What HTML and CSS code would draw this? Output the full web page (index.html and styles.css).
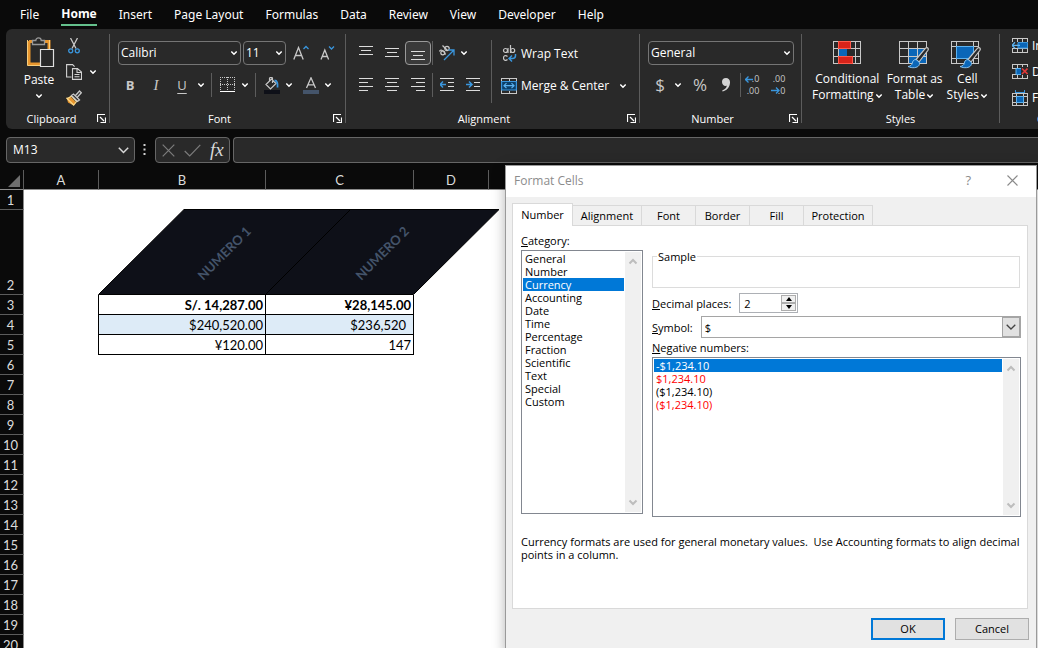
FILE: index.html
```html
<!DOCTYPE html>
<html lang="en">
<head>
<meta charset="utf-8">
<title>Format Cells</title>
<link rel="stylesheet" href="styles.css">
</head>
<body>
<svg class="defs" aria-hidden="true">
  <symbol id="chev" viewBox="0 0 8 6"><path d="M1.300 1.500 4 4.200 6.700 1.500" fill="none" stroke="currentColor" stroke-width="1.500"/></symbol>
  <symbol id="launch" viewBox="0 0 9 9"><path d="M.5 8V.5H8M3 3l4 4M8.500 3.500v5H3.500" fill="none" stroke="currentColor" stroke-width="1.2"/></symbol>
  <symbol id="scroll" viewBox="0 0 10 7"><path d="M1.500 5.500 5 2l3.500 3.500" fill="none" stroke="currentColor" stroke-width="2"/></symbol>
  <symbol id="brush" viewBox="0 0 24 22"><path d="M22.500 .8c-1-.7-2 .3-3 1.500L11 12.500l3 2.500L22.800 3.500c.7-1 .6-2-.3-2.700z" fill="#292929" stroke="#c8c8c8" stroke-width="1.200"/><path d="M11 12.500c-3 .2-3.300 2-3.800 4-.4 1.500-1.500 2.500-4.200 3 4 2 9.500 1.500 11-1.200.7-1.300.6-2.300 0-3.300z" fill="#0a66b8" stroke="#8cc4ee" stroke-width="1"/></symbol>
</svg>

<nav class="tabs">
  <button>File</button><button class="active">Home</button><button>Insert</button><button>Page Layout</button><button>Formulas</button><button>Data</button><button>Review</button><button>View</button><button>Developer</button><button>Help</button>
</nav>

<div class="ribbon">
  <section class="group clipboard">
    <div class="body">
      <button class="paste">
        <svg width="30" height="32" viewBox="0 0 30 32"><path d="M3 4.500h20V13M14 27H3V4" fill="none" stroke="#e8962e" stroke-width="3"/><path d="M1.500 3v25.500H14M23.500 3v10" fill="none" stroke="#f8ce7c"/><path d="M6.500 7.500v-4h3.300a2.700 2.700 0 0 1 5.400 0h3.300v4z" fill="#292929" stroke="#989898" stroke-width="1.300"/><path d="M14.500 12.500h13v17h-13z" fill="#292929" stroke="#e0e0e0" stroke-width="1.200"/></svg>
        <span>Paste</span>
        <svg class="chev"><use href="#chev"/></svg>
      </button>
      <div class="clip-side">
        <button aria-label="Cut"><svg width="16" height="16" viewBox="0 0 16 16"><path d="M4.500 0 10 10.500M11.500 0 6 10.500" stroke="#c8c8c8" stroke-width="1.300"/><circle cx="4.700" cy="12.800" r="2" fill="none" stroke="#3a96dd" stroke-width="1.300"/><circle cx="11.300" cy="12.800" r="2" fill="none" stroke="#3a96dd" stroke-width="1.300"/></svg></button>
        <button aria-label="Copy"><svg width="16" height="16" viewBox="0 0 16 16"><path d="M5.500 13H.6V.6h6l2 2M6.500 4.600h5l4 3.500v7.300h-9zM11 4.800v3.700h4M8.500 10.500h5M8.500 12.800h5" fill="none" stroke="#d2d2d2" stroke-width="1.100"/></svg><svg class="chev"><use href="#chev"/></svg></button>
        <button aria-label="Format Painter"><svg width="16" height="16" viewBox="0 0 16 16"><path d="M.8 8.300 5 7l5 5.500-2.500 3L2 12.500z" fill="#e8962e"/><path d="M1 8.300c2 0 3-.8 4.500-2.300l5 5.500L7.700 15z" fill="none" stroke="#f8d88c" stroke-width="1.200"/><path d="M5.500 5.500 7.500 4l6 6-2 1.500zM9.500 5.500l4-4.500 1.800 1.800-4 4.500" fill="#292929" stroke="#c8c8c8" stroke-width="1.300"/></svg></button>
      </div>
    </div>
    <footer><span>Clipboard</span><button aria-label="Clipboard settings"><svg class="launch"><use href="#launch"/></svg></button></footer>
  </section>

  <section class="group font">
    <div class="body rows">
      <div class="row pick">
        <label class="drop family"><select aria-label="Font family"><option>Calibri</option></select><svg class="chev"><use href="#chev"/></svg></label>
        <label class="drop size"><select aria-label="Font size"><option>11</option></select><svg class="chev"><use href="#chev"/></svg></label>
        <button class="tool" aria-label="Increase font size"><svg width="16" height="16" viewBox="0 0 16 16"><path d="M.8 14.500 5.500 2.500l4.700 12M2.500 10.500h6" fill="none" stroke="#c8c8c8" stroke-width="1.300"/><path d="M10.500 4 13 1.500 15.500 4" fill="none" stroke="#3a96dd" stroke-width="1.300"/></svg></button>
        <button class="tool" aria-label="Decrease font size"><svg width="16" height="16" viewBox="0 0 16 16"><path d="M2 14.500 5.800 5l3.800 9.500M3.300 11.500h5" fill="none" stroke="#c8c8c8" stroke-width="1.300"/><path d="M10 1.500 12.500 4 15 1.500" fill="none" stroke="#3a96dd" stroke-width="1.300"/></svg></button>
      </div>
      <div class="row">
        <button class="tool bold">B</button><button class="tool italic">I</button><button class="tool under">U</button><button class="more" aria-label="Underline styles"><svg class="chev"><use href="#chev"/></svg></button>
        <i class="sep"></i>
        <button class="tool slim" aria-label="Borders"><svg width="16" height="16" viewBox="0 0 16 16" shape-rendering="crispEdges"><path d="M0 .5h16M0 7.500h16M.5 0v15M7.500 0v15M14.500 0v15" stroke="#c8c8c8" stroke-dasharray="1 1"/><path d="M0 14.500h15" stroke="#fff"/></svg></button><button class="more" aria-label="Border styles"><svg class="chev"><use href="#chev"/></svg></button>
        <i class="sep"></i>
        <button class="tool slim" aria-label="Fill color"><svg width="16" height="17" viewBox="0 0 16 17"><path d="M2 7.500 7.500 2l4.500 4.500-5.500 5.500zM5.500 4V1.500c0-1.500 3-1.500 3 0V6" fill="none" stroke="#c8c8c8" stroke-width="1.200"/><path d="M10.500 3.500c2.500 0 3.500 2.500 3 7" fill="none" stroke="#3a96dd" stroke-width="1.800"/><path d="M0 13h16v4H0z" fill="#0e1018"/></svg></button><button class="more" aria-label="Fill colors"><svg class="chev"><use href="#chev"/></svg></button>
        <button class="tool slim ink" aria-label="Font color"><svg width="16" height="17" viewBox="0 0 16 17"><path d="M3.500 11 8 .8l4.500 10.200M5 7.800h6" fill="none" stroke="#c8c8c8" stroke-width="1.300"/><path d="M0 13h16v4H0z" fill="#44546a"/></svg></button><button class="more" aria-label="Font colors"><svg class="chev"><use href="#chev"/></svg></button>
      </div>
    </div>
    <footer><span>Font</span><button aria-label="Font settings"><svg class="launch"><use href="#launch"/></svg></button></footer>
  </section>

  <section class="group align">
    <div class="body">
      <div class="rows">
        <div class="row">
          <button class="tool" aria-label="Top align"><svg class="lines" viewBox="0 0 14 16"><path d="M0 1.500h14M2 5.500h10M0 9.500h14"/></svg></button>
          <button class="tool" aria-label="Middle align"><svg class="lines" viewBox="0 0 14 16"><path d="M0 3.500h14M2 7.500h10M0 11.500h14"/></svg></button>
          <button class="tool on" aria-label="Bottom align"><svg class="lines" viewBox="0 0 14 16"><path d="M0 6.500h14M2 10.500h10M0 14.500h14"/></svg></button>
          <i class="sep tight"></i>
          <button class="tool" aria-label="Orientation"><svg width="18" height="18" viewBox="0 0 18 18"><g fill="none" stroke="#c8c8c8" stroke-width="1.200"><circle cx="4.800" cy="8.800" r="2"/><path d="M1.500 7.500c1-2.500 3-2 6.200 3"/><circle cx="9" cy="4.500" r="2.200"/><path d="m4.500 1.500 5 5"/></g><path d="M6 16 15.500 6.500M10.500 6h5.500v5.500" fill="none" stroke="#3a96dd" stroke-width="1.300"/></svg></button><button class="more" aria-label="Orientation options"><svg class="chev"><use href="#chev"/></svg></button>
        </div>
        <div class="row">
          <button class="tool" aria-label="Align left"><svg class="lines" viewBox="0 0 14 16"><path d="M0 1.500h14M0 5.500h9M0 9.500h14M0 13.500h9"/></svg></button>
          <button class="tool" aria-label="Center"><svg class="lines" viewBox="0 0 14 16"><path d="M0 1.500h14M2 5.500h10M0 9.500h14M2 13.500h10"/></svg></button>
          <button class="tool" aria-label="Align right"><svg class="lines" viewBox="0 0 14 16"><path d="M0 1.500h14M5 5.500h9M0 9.500h14M5 13.500h9"/></svg></button>
          <i class="sep tight"></i>
          <button class="tool" aria-label="Decrease indent"><svg class="lines" viewBox="0 0 14 16"><path d="M0 1.500h14M8 5.500h6M8 9.500h6M0 13.500h14"/><path class="blue" d="M0 7.500h6M3 4.500l-3 3 3 3"/></svg></button>
          <button class="tool" aria-label="Increase indent"><svg class="lines" viewBox="0 0 14 16"><path d="M0 1.500h14M8 5.500h6M8 9.500h6M0 13.500h14"/><path class="blue" d="M0 7.500h6M3 4.500l3 3-3 3"/></svg></button>
        </div>
      </div>
      <div class="merge">
        <button><svg width="16" height="18" viewBox="0 0 16 18"><g fill="none" stroke="#c8c8c8" stroke-width="1.200"><circle cx="4.500" cy="5.500" r="2"/><path d="M7 3v5"/><path d="M9.500 0v8"/><circle cx="11.700" cy="5.500" r="2"/><path d="M6.500 11.500c-2-1.800-4-.5-4 1.500s2 3.500 4 1.500"/></g><path d="M14.500 9v1.500c0 2-1.500 3-3 3H8.500M11 10.500l-3 3 3 3" fill="none" stroke="#3a96dd" stroke-width="1.500"/></svg><span>Wrap Text</span></button>
        <button><svg width="16" height="16" viewBox="0 0 16 16"><path d="M.5 .5h15v15H.5zM8 0v3M8 12.500V16" fill="none" stroke="#c8c8c8" shape-rendering="crispEdges"/><path d="M.6 3.500h14.800v8.500H.6z" fill="#0c3f68" stroke="#3a96dd" stroke-width="1.200"/><path d="M3 7.700h10M5.500 5.200 3 7.700l2.500 2.500M10.500 5.200 13 7.700l-2.500 2.500" fill="none" stroke="#5cb2f0" stroke-width="1.200"/></svg><span>Merge &amp; Center</span><svg class="chev"><use href="#chev"/></svg></button>
      </div>
    </div>
    <footer><span>Alignment</span><button aria-label="Alignment settings"><svg class="launch"><use href="#launch"/></svg></button></footer>
  </section>

  <section class="group number">
    <div class="body rows">
      <div class="row pick"><label class="drop"><select aria-label="Number format"><option>General</option></select><svg class="chev"><use href="#chev"/></svg></label></div>
      <div class="row">
        <button class="tool glyph">$</button><button class="more" aria-label="Currencies"><svg class="chev"><use href="#chev"/></svg></button>
        <button class="tool glyph pct">%</button>
        <button class="tool" aria-label="Comma style"><svg width="10" height="14" viewBox="0 0 10 14"><path d="M5 0a4 4 0 0 1 4 4.200C9 9 6 12.500 1.500 13.500l-.3-1C4 11.500 5.500 9.800 5.800 7.800 3 8.500 1 6.500 1 4a4 4 0 0 1 4-4z" fill="#d2d2d2"/></svg></button>
        <i class="sep tight"></i>
        <button class="tool decimals" aria-label="Increase decimal"><span>.0</span><span>.00</span><svg width="9" height="7" viewBox="0 0 9 7"><path d="M0 3.500h8M3.500 .5l-3 3 3 3" fill="none" stroke="#3a96dd" stroke-width="1.300"/></svg></button>
        <button class="tool decimals dec" aria-label="Decrease decimal"><span>.00</span><span>.0</span><svg width="9" height="7" viewBox="0 0 9 7"><path d="M0 3.500h8M5 .5l3 3-3 3" fill="none" stroke="#3a96dd" stroke-width="1.300"/></svg></button>
      </div>
    </div>
    <footer><span>Number</span><button aria-label="Number settings"><svg class="launch"><use href="#launch"/></svg></button></footer>
  </section>

  <section class="group styles">
    <div class="body">
      <button class="big"><svg width="28" height="28" viewBox="0 0 28 28"><g shape-rendering="crispEdges"><path d="M.5 .5h27v22H.5zM5.500 0v23M22.500 0v23M0 7.500h28M0 15.500h28" fill="none" stroke="#c8c8c8"/><path d="M5.500 .5h12v7h-12zM5.500 15.500h14v7h-14z" fill="#d8231a" stroke="#ff5a4a"/><path d="M6 8h8v7H6z" fill="#0a66b8"/><path d="M14 8h8v7h-8z" fill="#292929"/></g></svg><span>Conditional</span><span>Formatting <svg class="chev"><use href="#chev"/></svg></span></button>
      <button class="big"><svg width="32" height="28" viewBox="0 0 32 28"><g shape-rendering="crispEdges"><path d="M10 8h18v15H10z" fill="#0a66b8"/><path d="M.5 .5h27v22H.5zM9.500 0v23M18.500 0v23M0 7.500h28M0 15.500h28" fill="none" stroke="#c8c8c8"/></g><use href="#brush" x="6" y="6" width="24" height="22"/></svg><span>Format as</span><span>Table <svg class="chev"><use href="#chev"/></svg></span></button>
      <button class="big"><svg width="32" height="28" viewBox="0 0 32 28"><g shape-rendering="crispEdges"><path d="M.5 .5h27v22H.5zM5.500 0v23M22.500 0v23M0 5.500h28M0 17.500h28" fill="none" stroke="#c8c8c8"/><path d="M5.500 5.500h17v12h-17z" fill="#0a66b8" stroke="#5cb2f0"/></g><use href="#brush" x="6" y="6" width="24" height="22"/></svg><span>Cell</span><span>Styles <svg class="chev"><use href="#chev"/></svg></span></button>
    </div>
    <footer><span>Styles</span></footer>
  </section>

  <section class="group cells">
    <div class="body">
      <button><svg width="16" height="16" viewBox="0 0 16 16"><path d="M.5 .5h15v14H.5zM5.500 0v15M10.500 0v15M0 4.500h16M0 10.500h16" fill="none" stroke="#c8c8c8" shape-rendering="crispEdges"/><path d="M0 4h16v6H0z" fill="#292929"/><path d="M6 4.500h9.500v5.500H6z" fill="#0a66b8" stroke="#3a96dd"/><path d="M0 7.300h8M3 4.300l-3 3 3 3" fill="none" stroke="#5cb2f0" stroke-width="1.300"/></svg><span>Insert</span></button>
      <button><svg width="16" height="16" viewBox="0 0 16 16"><path d="M.5 4.500v-4h15v4zM.5 10.500h15v4H.5zM5.500 0v15M10.500 0v4M10.500 11v4M0 4.500h5" fill="none" stroke="#c8c8c8" shape-rendering="crispEdges"/><path d="M4 4.500h6v6H4z" fill="#0a66b8" stroke="#5cb2f0"/><path d="M9 3h7v8H9z" fill="#292929"/><path d="m10 4.500 5.500 5.500M15.500 4.500 10 10" stroke="#e03a3a" stroke-width="1.600"/></svg><span>Delete</span></button>
      <button><svg width="16" height="16" viewBox="0 0 16 16"><path d="M.5 3.500h15v12H.5zM4.500 3v13M11.500 3v13M0 6.500h16M0 12.500h16" fill="none" stroke="#c8c8c8" shape-rendering="crispEdges"/><path d="M4.500 6.500h7v6h-7z" fill="#0a66b8" stroke="#5cb2f0"/><path d="M3 2.500h10M3.500 0v3M12.500 0v3" fill="none" stroke="#3a96dd" shape-rendering="crispEdges"/></svg><span>Format</span></button>
    </div>
    <footer><span>Cells</span></footer>
  </section>
</div>

<div class="formula">
  <div class="namebox"><input type="text" value="M13" aria-label="Name box"><button aria-label="Names"><svg width="11" height="7" viewBox="0 0 11 7"><path d="m.8 .8 4.700 4.700L10.200 .8" fill="none" stroke="#d8d8d8" stroke-width="1.500"/></svg></button></div>
  <svg class="dots" width="3" height="12" viewBox="0 0 3 12"><path d="M.5 0h2v2h-2zM.5 4.500h2v2h-2zM.5 9h2v2h-2z" fill="#d2d2d2"/></svg>
  <div class="fx">
    <button aria-label="Cancel entry"><svg width="13" height="13" viewBox="0 0 13 13"><path d="m.7 .7 11.600 11.600M12.300 .7 .7 12.300" stroke="#7c7c7c" stroke-width="1.200"/></svg></button>
    <button aria-label="Enter"><svg width="17" height="13" viewBox="0 0 17 13"><path d="m.7 7 5 5L16.300 .8" fill="none" stroke="#7c7c7c" stroke-width="1.200"/></svg></button>
    <button class="fn">fx</button>
  </div>
  <input class="entry" type="text" aria-label="Formula bar">
</div>

<main class="sheet">
  <table>
    <colgroup><col class="c-head"><col class="c-a"><col class="c-b"><col class="c-c"><col class="c-a"><col></colgroup>
    <thead><tr><th class="corner"><svg width="12" height="12" viewBox="0 0 12 12"><path d="M12 0v12H0z" fill="#6e6e6e"/></svg></th><th>A</th><th>B</th><th>C</th><th>D</th><th></th></tr></thead>
    <tbody>
      <tr><th>1</th></tr>
      <tr class="tall"><th>2</th><td></td><td class="slant">
        <svg width="402" height="86" viewBox="0 0 402 86"><path d="M.5 85.500 86 .5h315L315.500 85.500z" fill="#0e1018"/><path d="M.5 85.500 86 .5h315L315.500 85.500zM167.500 85.500l85-85" fill="none" stroke="#000"/></svg>
        <span class="one">NUMERO 1</span><span class="two">NUMERO 2</span></td><td></td></tr>
      <tr class="strong"><th>3</th><td class="edge"></td><td class="cell">S/. 14,287.00</td><td class="cell">¥28,145.00</td></tr>
      <tr class="band"><th>4</th><td class="edge"></td><td class="cell">$240,520.00</td><td class="cell acct">$236,520</td></tr>
      <tr><th>5</th><td class="edge"></td><td class="cell">¥120.00</td><td class="cell">147</td></tr>
      <tr><th>6</th></tr><tr><th>7</th></tr><tr><th>8</th></tr><tr><th>9</th></tr><tr><th>10</th></tr><tr><th>11</th></tr><tr><th>12</th></tr><tr><th>13</th></tr><tr><th>14</th></tr><tr><th>15</th></tr><tr><th>16</th></tr><tr><th>17</th></tr><tr><th>18</th></tr><tr><th>19</th></tr><tr><th>20</th></tr>
    </tbody>
  </table>
</main>

<div class="dialog" role="dialog" aria-labelledby="dlg-title">
  <header><h1 id="dlg-title">Format Cells</h1><button class="help" aria-label="Help">?</button><button aria-label="Close"><svg width="11" height="11" viewBox="0 0 11 11"><path d="m.5 .5 10 10M10.500 .5l-10 10" stroke="#8a8a8a" stroke-width="1.100"/></svg></button></header>
  <div class="sheets" role="tablist">
    <button role="tab" class="active" aria-selected="true">Number</button><button role="tab" class="wide">Alignment</button><button role="tab">Font</button><button role="tab">Border</button><button role="tab">Fill</button><button role="tab" class="wide">Protection</button>
  </div>
  <div class="panel">
    <div class="cols">
      <div class="cat">
        <div class="cap" id="cat"><u>C</u>ategory:</div>
        <div class="list">
          <ul role="listbox" aria-labelledby="cat">
            <li role="option">General</li><li role="option">Number</li><li role="option" class="sel" aria-selected="true">Currency</li><li role="option">Accounting</li><li role="option">Date</li><li role="option">Time</li><li role="option">Percentage</li><li role="option">Fraction</li><li role="option">Scientific</li><li role="option">Text</li><li role="option">Special</li><li role="option">Custom</li>
          </ul>
          <div class="bar"><svg><use href="#scroll"/></svg><svg class="down"><use href="#scroll"/></svg></div>
        </div>
      </div>
      <div class="opts">
        <fieldset><legend>Sample</legend></fieldset>
        <div class="line dp"><label for="places"><u>D</u>ecimal places:</label>
          <div class="spin"><input id="places" type="text" value="2"><div><button aria-label="Up"><svg width="6" height="4" viewBox="0 0 6 4"><path d="M3 0 6 4H0z"/></svg></button><button aria-label="Down"><svg width="6" height="4" viewBox="0 0 6 4"><path d="M3 4 0 0h6z"/></svg></button></div></div></div>
        <div class="line sym"><label for="symbol"><u>S</u>ymbol:</label>
          <div class="combo"><select id="symbol"><option>$</option></select><span><svg width="10" height="6" viewBox="0 0 10 6"><path d="m.7 .7 4.300 4.300L9.300 .7" fill="none" stroke="#444" stroke-width="1.300"/></svg></span></div></div>
        <div class="cap" id="neg"><u>N</u>egative numbers:</div>
        <div class="list neg">
          <ul role="listbox" aria-labelledby="neg"><li role="option" class="sel" aria-selected="true">-$1,234.10</li><li role="option" class="red">$1,234.10</li><li role="option">($1,234.10)</li><li role="option" class="red">($1,234.10)</li></ul>
          <div class="bar"><svg><use href="#scroll"/></svg><svg class="down"><use href="#scroll"/></svg></div>
        </div>
      </div>
    </div>
    <p>Currency formats are used for general monetary values.&nbsp; Use Accounting formats to align decimal points in a column.</p>
  </div>
  <div class="actions"><button class="ok">OK</button><button>Cancel</button></div>
</div>
</body>
</html>
```
FILE: styles.css
```css
* { box-sizing: border-box; }
html, body { height: 100%; }
body {
  margin: 0;
  display: flex;
  flex-direction: column;
  overflow: hidden;
  position: relative;
  background: #0a0a0a;
  color: #fff;
  font: 12px/16px "Open Sans", "Noto Sans", sans-serif;
}
button, input, select { font: inherit; color: inherit; margin: 0; padding: 0; border: 0; background: none; }
select { appearance: none; }
svg { display: block; flex: none; }
.defs { position: absolute; width: 0; height: 0; }
.chev { width: 8px; height: 6px; }
.launch { width: 9px; height: 9px; }

/* Ribbon tabs */
.tabs { display: flex; gap: 22px; padding: 4px 0 0 20px; height: 29px; flex: none; font-family: "Noto Sans", sans-serif; }
.tabs button { height: 22px; line-height: 20px; white-space: nowrap; }
.tabs .active { font-weight: 700; border-bottom: 2px solid #64c08c; }

/* Ribbon */
.ribbon {
  display: flex;
  flex: none;
  height: 100px;
  margin-left: 6px;
  padding: 5px 0 6px;
  background: #292929;
  border-radius: 6px 0 0 6px;
  overflow: hidden;
}
.group { flex: none; display: flex; flex-direction: column; border-right: 1px solid #5c5c5c; }
.group .body { flex: 1; display: flex; }
.group footer { position: relative; height: 9px; line-height: 9px; font-size: 11px; text-align: center; }
.group footer button { position: absolute; right: 3px; top: 0; }
.clipboard { width: 104px; }
.clipboard footer { padding-right: 12px; }
.font { width: 236px; }
.font footer, .number footer { padding-right: 16px; }
.align { width: 294px; }
.align footer { padding-right: 17px; }
.number { width: 162px; }
.styles { width: 198px; }
.cells { width: 98px; border: 0; }

.paste { width: 30px; margin: 3px 10px 0 18px; display: flex; flex-direction: column; align-items: center; align-self: flex-start; }
.paste span { margin: 3px 0 5px; }
.paste svg:first-child { margin-left: 4px; }
.clip-side { display: flex; flex-direction: column; gap: 10px; padding: 4px 0 0 2px; }
.clip-side button { display: flex; align-items: center; gap: 7px; }

.group .rows { display: flex; flex-direction: column; gap: 8px; padding: 7px 7px 0; }
.row { display: flex; align-items: center; height: 24px; }
.row.pick { padding-left: 1px; }
.tool { width: 26px; height: 24px; display: flex; align-items: center; justify-content: center; color: #c8c8c8; flex: none; }
.tool.slim { width: 23px; }
.tool.ink { margin-left: 4px; }
.tool.on { border: 1px solid #9a9a9a; border-radius: 4px; background: #3a3a3a; }
.more { width: 12px; height: 24px; display: flex; align-items: center; justify-content: center; }
.sep { width: 1px; height: 24px; background: #5c5c5c; margin: 0 4px; flex: none; }
.sep.tight { margin: 0 1px; }
.bold { font-weight: 700; font-size: 13px; }
.italic { font: italic 15px "Liberation Serif", serif; }
.under { font-size: 13px; text-decoration: underline; text-underline-offset: 3px; }
.glyph { font-size: 17px; }
.number .pct { margin-left: 4px; }

.drop { display: grid; align-items: center; flex: 1; height: 24px; border: 1px solid #757575; border-radius: 4px; }
.drop > * { grid-area: 1 / 1; }
.drop select { width: 100%; padding-left: 2px; }
.drop svg { justify-self: end; margin-right: 2px; pointer-events: none; }
.drop.family { flex: none; width: 123px; }
.drop.size { flex: none; width: 43px; margin: 0 2px 0 2px; }

.lines { width: 14px; height: 16px; shape-rendering: crispEdges; fill: none; stroke: #dcdcdc; }
.lines .blue { stroke: #3a96dd; shape-rendering: auto; stroke-width: 1.5; }
.align .more { width: 8px; }
.align .rows { padding-right: 5px; }
.merge { display: flex; flex-direction: column; gap: 8px; height: 63px; margin-top: 6px; padding: 2px 0 0 9px; border-left: 1px solid #5c5c5c; }
.merge button { height: 24px; display: flex; align-items: center; gap: 4px; white-space: nowrap; }
.merge .chev { margin-left: 6px; }

.decimals { display: grid; font-size: 9px; line-height: 12px; align-content: center; justify-items: end; padding-right: 4px; position: relative; }
.decimals svg { position: absolute; left: 3px; top: 3px; }
.decimals.dec svg { top: 14px; }

.styles .body { padding: 7px 8px 0 10px; gap: 4px; }
.big { display: flex; flex-direction: column; align-items: center; align-self: flex-start; white-space: nowrap; }
.big > svg { margin-bottom: 2px; }
.big .chev { display: inline-block; vertical-align: middle; margin-left: -2px; }

.cells .body { flex-direction: column; gap: 10px; padding: 4px 0 0 12px; }
.cells .body button { display: flex; align-items: center; gap: 4px; }

/* Formula bar */
.formula { display: flex; align-items: center; flex: none; height: 26px; margin: 8px 0 7px 6px; }
.namebox, .fx, .entry { height: 26px; background: #292929; border: 1px solid #666; border-radius: 4px; }
.namebox { display: flex; align-items: center; width: 129px; padding: 0 5px 0 6px; }
.namebox input { flex: 1; min-width: 0; }
.dots { margin: 0 9px 0 8px; }
.fx { display: flex; align-items: center; gap: 9px; width: 75px; padding: 0 4px 0 6px; margin-right: 3px; }
.fn { font: italic 19px/20px "Liberation Serif", serif; color: #d8d8d8; }
.entry { flex: 1; border-right: 0; border-radius: 4px 0 0 4px; }

/* Worksheet */
.sheet { flex: 1; min-height: 0; overflow: hidden; background: linear-gradient(#0a0a0a 20px, #fff 20px); }
.sheet table { width: 100%; table-layout: fixed; border-collapse: separate; border-spacing: 0; font: 13px/18px Lato, sans-serif; color: #000; }
.c-head { width: 24px; }
.c-a { width: 75px; }
.c-b { width: 167px; }
.c-c { width: 148px; }
.sheet th, .sheet td { padding: 0; height: 20px; }
.sheet th { padding-top: 1px; font-weight: 400; color: #dcdcdc; background: #0a0a0a; border-right: 1px solid #5c5c5c; border-bottom: 1px solid #5c5c5c; }
.sheet tbody th { border-right-color: #8c8c8c; padding-right: 2px; }
.sheet thead th { border-bottom-color: #8c8c8c; }
.sheet thead th:last-child { border-right: 0; }
.sheet .corner svg { margin: 2px 3px 0 auto; }
.sheet .tall th, .sheet .tall td { height: 85px; vertical-align: bottom; }
.sheet .edge { border-right: 1px solid #000; }
.sheet .cell { text-align: right; border-right: 1px solid #000; border-bottom: 1px solid #000; padding: 1px 2px 0 0; }
.sheet .acct { padding-right: 7px; }
.strong td { font-weight: 700; }
.band .cell { background: #ddebf7; }
.sheet .slant { position: relative; }
.slant svg { position: absolute; left: -1px; top: -1px; }
.slant span { position: absolute; top: 34px; width: 100px; text-align: center; font-weight: 700; color: #44546a; transform: rotate(-45deg); }
.slant .one { left: 75px; }
.slant .two { left: 233px; }

/* Format Cells dialog */
.dialog {
  position: absolute;
  left: 505px;
  right: 1px;
  top: 165px;
  bottom: -6px;
  display: flex;
  flex-direction: column;
  background: #f0f0f0;
  border: 1px solid #9a9a9a;
  box-shadow: 0 2px 12px rgba(0, 0, 0, .3);
  color: #000;
  font-size: 11px;
  line-height: 13px;
}
.dialog header { display: flex; align-items: center; height: 31px; padding: 0 18px 2px 8px; background: #fff; color: #8c8c8c; flex: none; }
.dialog h1 { flex: 1; margin: 0; font-size: 12px; font-weight: 400; }
.dialog .help { margin-right: 36px; font-size: 13px; }
.sheets { display: flex; align-items: flex-end; height: 28px; padding-left: 6px; flex: none; }
.sheets button { width: 54px; height: 20px; border: 1px solid #d9d9d9; border-left: 0; border-bottom: 0; }
.sheets .wide { width: 69px; }
.sheets .active { position: relative; width: 61px; height: 23px; margin-bottom: -1px; padding-bottom: 2px; border-left: 1px solid #d9d9d9; background: #fff; }
.panel { flex: 1; min-height: 0; margin: 0 8px 0 6px; padding: 8px 6px 0 8px; background: #fff; border: 1px solid #d9d9d9; }
.cols { display: grid; grid-template-columns: 122px 1fr; gap: 9px; }
.cat .cap { margin-bottom: 3px; }
.list { display: flex; height: 264px; padding: 1px; border: 1px solid #828790; }
.list ul { flex: 1; margin: 0; padding: 0; list-style: none; }
.list li { padding-left: 2px; margin-right: 1px; }
.list .sel { background: #0078d7; color: #fff; }
.list .red { color: #f00; }
.bar { width: 16px; display: flex; flex-direction: column; justify-content: space-between; align-items: center; padding: 6px 0; background: #f0f0f0; color: #bdbdbd; }
.bar svg { width: 10px; height: 7px; }
.bar .down { transform: rotate(180deg); }
fieldset { height: 38px; margin: 16px 1px 5px 0; padding: 0 4px; border: 1px solid #dcdcdc; }
legend { padding: 0 1px; }
.line { display: flex; align-items: center; gap: 8px; }
.sym { margin: 3px 0; }
.spin { display: flex; width: 59px; height: 20px; padding: 1px; border: 1px solid #adb0b5; }
.spin input { flex: 1; min-width: 0; padding-left: 3px; }
.spin div { display: flex; flex-direction: column; width: 15px; }
.spin button { flex: 1; display: grid; place-items: center; background: #f0f0f0; border: 1px solid #adadad; }
.combo { flex: 1; display: grid; grid-template-columns: 1fr 18px; height: 22px; border: 1px solid #a5a5a5; }
.combo select { grid-area: 1 / 1 / 2 / 3; padding-left: 3px; }
.combo span { grid-area: 1 / 2; display: grid; place-items: center; background: #e1e1e1; border: 1px solid #a5a5a5; pointer-events: none; }
.list.neg { height: 160px; margin-top: 3px; }
.panel p { margin: 18px 0 0; }
.actions { display: flex; gap: 10px; justify-content: flex-end; padding: 9px 7px 13px 0; flex: none; }
.actions button { width: 74px; height: 22px; padding-bottom: 2px; background: #e1e1e1; border: 1px solid #adadad; }
.actions .ok { border: 2px solid #0078d7; }
```
